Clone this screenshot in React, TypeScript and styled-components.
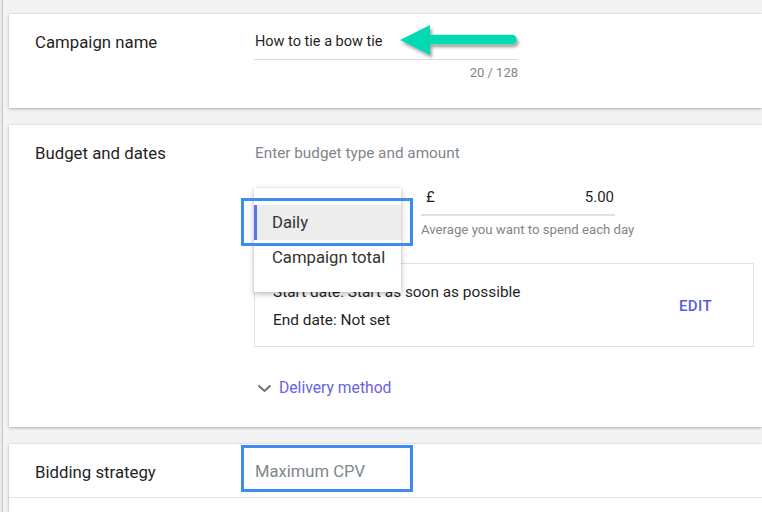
import styled, { createGlobalStyle } from "styled-components"

const GlobalStyle = createGlobalStyle`
    html, body {
        margin: 0;
        padding: 0;
        background: #f3f3f3;
        font-family: Roboto, "Liberation Sans", Arial, sans-serif;
        overflow: hidden;
    }
    * {
        box-sizing: border-box;
    }
`

const SPage = styled.div`
    height: 100vh;
    padding: 14px 0 0 9px;
    display: flex;
    flex-direction: column;
    gap: 17px;
    overflow: hidden;
    box-shadow: inset 2px 0 0 #e9e9e9, inset 3px 0 0 #c6c6c6;
`

const SCard = styled.section`
    background: #fff;
    box-shadow: 0 1px 3px rgba(0, 0, 0, 0.28), 0 0 1px rgba(0, 0, 0, 0.12);
`

const SLastCard = styled(SCard)`
    flex: 1;
`

const SRow = styled.div<{ $pad: string; $divider?: boolean }>`
    display: grid;
    grid-template-columns: 219px 1fr;
    padding: ${(p) => p.$pad};
    padding-left: 26px;
    border-bottom: ${(p) => (p.$divider ? "1px solid #e4e4e4" : "none")};
`

const SLabel = styled.div`
    font-size: 16.8px;
    line-height: 20px;
    color: #1f1f1f;
`

const SField = styled.div`
    position: relative;
    display: flex;
    flex-direction: column;
    align-items: flex-start;
`

const SInput = styled.div`
    position: relative;
    width: 264px;
    font-size: 14.5px;
    line-height: 20px;
    color: #1f1f1f;
    padding-left: 1px;
    padding-bottom: 7px;
    border-bottom: 1px solid #dcdcdc;
`

const SCounter = styled.div`
    width: 264px;
    margin-top: 5px;
    text-align: right;
    font-size: 13px;
    line-height: 16px;
    color: #80868b;
`

const SArrow = styled.svg`
    position: absolute;
    left: 142px;
    top: -10px;
    overflow: visible;
`

const SHint = styled.div<{ $size?: number }>`
    font-size: ${(p) => p.$size ?? 15.3}px;
    line-height: 20px;
    color: #80868b;
    padding-left: 1px;
`

const SBudgetRow = styled.div`
    position: relative;
    display: flex;
    gap: 20px;
    margin-top: 24px;
`

const SSelect = styled.div`
    width: 147px;
    font-size: 15px;
    line-height: 20px;
    padding: 0 0 7px 18px;
    border-bottom: 2px solid #e0e0e0;
    color: #212121;
`

const SMenu = styled.ul`
    position: absolute;
    top: 1px;
    left: 0;
    width: 147px;
    margin: 0;
    padding: 17px 0;
    list-style: none;
    background: #fff;
    box-shadow: 0 2px 6px rgba(0, 0, 0, 0.26), 0 0 2px rgba(0, 0, 0, 0.1);
    z-index: 2;
`

const SMenuItem = styled.li<{ $selected?: boolean }>`
    height: 35px;
    line-height: 35px;
    padding-left: 18px;
    font-size: 16.7px;
    color: #333;
    background: ${(p) => (p.$selected ? "#ededed" : "transparent")};
    box-shadow: ${(p) => (p.$selected ? "inset 3px 0 0 #5f6ff2" : "none")};
`

const SFocus = styled.div<{ $top: number; $h: number }>`
    position: absolute;
    left: -13px;
    top: ${(p) => p.$top}px;
    width: 172px;
    height: ${(p) => p.$h}px;
    border: 3px solid #3f8cf0;
    z-index: 3;
`

const SMoney = styled.div`
    width: 194px;
`

const SAmount = styled.div`
    display: flex;
    justify-content: space-between;
    font-size: 15px;
    line-height: 20px;
    color: #1f1f1f;
    padding: 0 1px 7px 5px;
    border-bottom: 2px solid #e0e0e0;
`

const SHelper = styled.div`
    margin-top: 6px;
    font-size: 13.2px;
    line-height: 16px;
    color: #80868b;
    white-space: nowrap;
`

const SDateBox = styled.div`
    width: 500px;
    height: 84px;
    margin-top: 25px;
    border: 1px solid #e0e0e0;
    display: flex;
    align-items: center;
    justify-content: space-between;
    padding-left: 18px;
`

const SDates = styled.div`
    display: flex;
    flex-direction: column;
    gap: 8px;
    font-size: 15.4px;
    line-height: 20px;
    color: #1f1f1f;
    margin-top: 2px;
`

const SEdit = styled.button`
    border: none;
    background: none;
    font-family: inherit;
    font-size: 15px;
    font-weight: 500;
    letter-spacing: 0.4px;
    color: #5a5de0;
    padding: 8px 16px;
    margin-top: 2px;
    margin-right: 25px;
`

const SDelivery = styled.div`
    display: flex;
    align-items: center;
    gap: 7px;
    margin-top: 31px;
    padding-left: 3px;
    font-size: 15.7px;
    line-height: 20px;
    color: #6b5fe6;
`

export default function App() {
    return (
        <>
            <GlobalStyle />
            <SPage>
                <SCard>
                    <SRow $pad="18px 0 27px">
                        <SLabel>Campaign name</SLabel>
                        <SField>
                            <SInput>
                                How to tie a bow tie
                                <SArrow width="126" height="38" viewBox="0 0 126 38">
                                    <defs>
                                        <filter id="arrowShadow" x="-20%" y="-40%" width="140%" height="200%">
                                            <feDropShadow dx="2" dy="3" stdDeviation="1.6" floodColor="#000" floodOpacity="0.35" />
                                        </filter>
                                    </defs>
                                    <g filter="url(#arrowShadow)" fill="#00d9b1">
                                        <line x1="30" y1="17.5" x2="116" y2="17.5" stroke="#00d9b1" strokeWidth="9.5" strokeLinecap="round" />
                                        <polygon points="4,18 34,3 34,33" />
                                    </g>
                                </SArrow>
                            </SInput>
                            <SCounter>20 / 128</SCounter>
                        </SField>
                    </SRow>
                </SCard>

                <SCard>
                    <SRow $pad="18px 0 29px">
                        <SLabel>Budget and dates</SLabel>
                        <SField>
                            <SHint>Enter budget type and amount</SHint>
                            <SBudgetRow>
                                <SSelect>Daily</SSelect>
                                <SMenu>
                                    <SMenuItem $selected>Daily</SMenuItem>
                                    <SMenuItem>Campaign total</SMenuItem>
                                </SMenu>
                                <SFocus $top={11} $h={48} />
                                <SMoney>
                                    <SAmount>
                                        <span>£</span>
                                        <span>5.00</span>
                                    </SAmount>
                                    <SHelper>Average you want to spend each day</SHelper>
                                </SMoney>
                            </SBudgetRow>
                            <SDateBox>
                                <SDates>
                                    <span>Start date: Start as soon as possible</span>
                                    <span>End date: Not set</span>
                                </SDates>
                                <SEdit>EDIT</SEdit>
                            </SDateBox>
                            <SDelivery>
                                <svg width="15" height="9" viewBox="0 0 15 9">
                                    <polyline points="1.5,1.5 7.5,7 13.5,1.5" fill="none" stroke="#6f6f6f" strokeWidth="2" />
                                </svg>
                                Delivery method
                            </SDelivery>
                        </SField>
                    </SRow>
                </SCard>

                <SLastCard>
                    <SRow $pad="18px 0 15px" $divider>
                        <SLabel>Bidding strategy</SLabel>
                        <SField>
                            <SHint $size={16.6}>Maximum CPV</SHint>
                            <SFocus $top={-17} $h={47} />
                        </SField>
                    </SRow>
                </SLastCard>
            </SPage>
        </>
    )
}
